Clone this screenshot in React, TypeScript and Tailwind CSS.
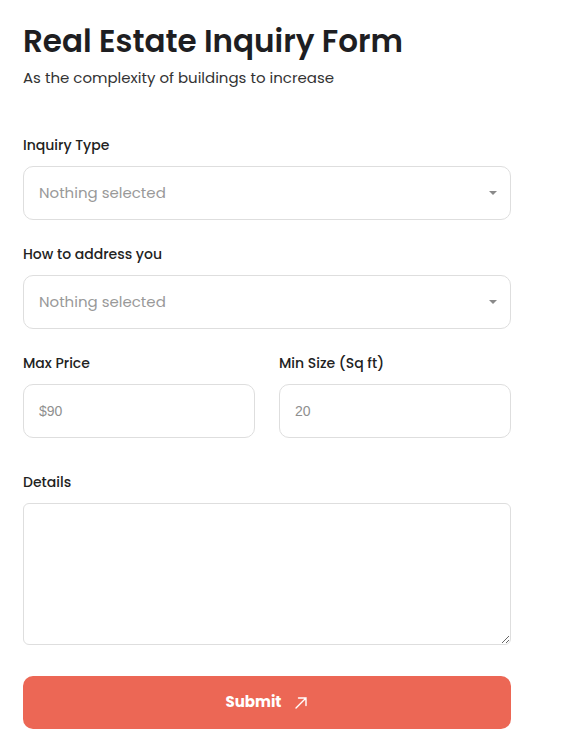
import React from "react";

const Caret = () => (
  <svg width="8" height="4" viewBox="0 0 8 4" className="absolute right-[13px] top-1/2 -translate-y-1/2">
    <path d="M0 0 L8 0 L4 4 Z" fill="#8a8a8a" />
  </svg>
);

function Select({ label, className }: { label: string; className?: string }) {
  return (
    <div className={className}>
      <div className="h-[20px] text-[14px] leading-[20px] font-medium text-[#222]">{label}</div>
      <div className="relative mt-[11px] h-[54px] rounded-[10px] border border-[#dedede] bg-white flex items-center pl-[15px]">
        <span className="text-[15px] text-[#999] font-['Poppins',sans-serif]">Nothing selected</span>
        <Caret />
      </div>
    </div>
  );
}

function Input({ label, value }: { label: string; value: string }) {
  return (
    <div className="flex-1">
      <div className="h-[20px] text-[14px] leading-[20px] font-medium text-[#222]">{label}</div>
      <div className="mt-[11px] h-[54px] rounded-[10px] border border-[#dedede] bg-white flex items-center pl-[15px]">
        <span className="text-[14px] text-[#8f8f8f] font-['Liberation_Sans',Arial,sans-serif]">{value}</span>
      </div>
    </div>
  );
}

export default function App() {
  return (
    <div className="w-[566px] min-h-[751px] bg-white font-['Poppins','Open_Sans',sans-serif] text-[#222]">
      <div className="w-[488px] ml-[23px] pt-[21px]">
        <h1 className="text-[31px] leading-[40px] font-semibold text-[#1e1e22]">Real Estate Inquiry Form</h1>
        <p className="mt-[6px] text-[15px] leading-[22px] text-[#333]">As the complexity of buildings to increase</p>
        <Select label="Inquiry Type" className="mt-[46px]" />
        <Select label="How to address you" className="mt-[24px]" />
        <div className="mt-[24px] flex gap-[24px]">
          <Input label="Max Price" value="$90" />
          <Input label="Min Size (Sq ft)" value="20" />
        </div>
        <div className="mt-[34px]">
          <div className="h-[20px] text-[14px] leading-[20px] font-medium text-[#222]">Details</div>
          <textarea className="mt-[11px] block w-full h-[142px] rounded-[6px] border border-[#dedede] bg-white resize-y outline-none" />
        </div>
        <button className="mt-[31px] w-full h-[53px] rounded-[10px] bg-[#ec6755] flex items-center justify-center gap-[13px] text-white text-[15px] font-bold">
          <span>Submit</span>
          <svg width="14" height="14" viewBox="0 0 14 14" fill="none" stroke="white" strokeWidth="1.4" strokeLinecap="round">
            <path d="M2 12 L12 2 M4.5 2 H12 V9.5" />
          </svg>
        </button>
      </div>
    </div>
  );
}
